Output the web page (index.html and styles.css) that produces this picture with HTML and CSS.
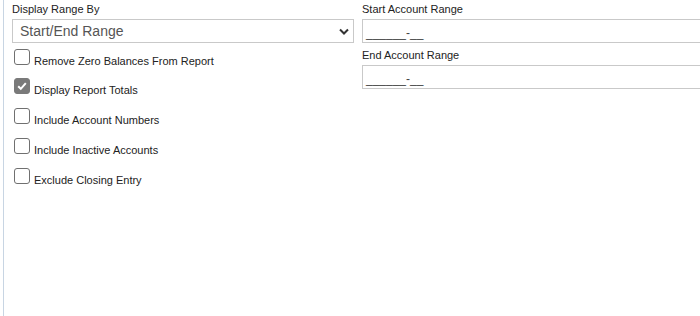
FILE: index.html
```html
<!DOCTYPE html>
<html>
<head>
<meta charset="utf-8">
<link rel="stylesheet" href="styles.css">
</head>
<body>
<div class="page">
  <div class="cols">
    <div class="col">
      <div class="label">Display Range By</div>
      <div class="select">
        <span>Start/End Range</span>
        <svg class="chev" width="10" height="7" viewBox="0 0 10 7"><path d="M1 1.5 L5 5.5 L9 1.5" fill="none" stroke="#333" stroke-width="2"/></svg>
      </div>
      <div class="checks">
        <div class="check"><span class="box"></span><span class="ctext">Remove Zero Balances From Report</span></div>
        <div class="check"><span class="box on"><svg width="14" height="14" viewBox="0 0 14 14"><path d="M3.2 7.2 L5.8 9.8 L10.8 4.2" fill="none" stroke="#fff" stroke-width="2"/></svg></span><span class="ctext">Display Report Totals</span></div>
        <div class="check"><span class="box"></span><span class="ctext">Include Account Numbers</span></div>
        <div class="check"><span class="box"></span><span class="ctext">Include Inactive Accounts</span></div>
        <div class="check"><span class="box"></span><span class="ctext">Exclude Closing Entry</span></div>
      </div>
    </div>
    <div class="col">
      <div class="label">Start Account Range</div>
      <div class="input">______-__</div>
      <div class="label second">End Account Range</div>
      <div class="input">______-__</div>
    </div>
  </div>
</div>
</body>
</html>
```
FILE: styles.css
```css
html, body {
  margin: 0;
  padding: 0;
  background: #fff;
  overflow: hidden;
}
body {
  font-family: "Liberation Sans", Arial, sans-serif;
  color: #222;
}
.page {
  margin-left: 3px;
  border-left: 1px solid #c8d5e3;
  padding-left: 8px;
  height: 316px;
}
.cols {
  display: grid;
  grid-template-columns: 342px 342px;
  column-gap: 8px;
}
.label {
  font-size: 11px;
  line-height: 13px;
  padding-top: 3px;
  margin-bottom: 3px;
  color: #222;
}
.label.second {
  margin-top: 3px;
}
.select {
  height: 22px;
  border: 1px solid #c9c9c9;
  display: flex;
  align-items: center;
  justify-content: space-between;
  padding: 0 4px 0 7px;
  font-size: 14px;
  color: #555;
}
.chev {
  display: block;
}
.input {
  border: 1px solid #c9c9c9;
  font-size: 12px;
  line-height: 22px;
  padding: 2px 0 0 3px;
  height: 20px;
  color: #444;
}
.checks {
  display: flex;
  flex-direction: column;
  margin-top: 6px;
}
.check {
  display: flex;
  align-items: flex-end;
  height: 16px;
  margin-bottom: 14px;
}
.check:first-child {
  margin-bottom: 13px;
}
.box {
  width: 14px;
  height: 14px;
  border: 1px solid #707070;
  border-radius: 3px;
  margin-left: 2px;
  flex: none;
}
.box.on {
  background: #7a7a7a;
  border-color: #7a7a7a;
}
.box svg {
  display: block;
}
.ctext {
  font-size: 11px;
  line-height: 13px;
  margin-left: 4px;
  margin-bottom: -3px;
  color: #222;
}
```
